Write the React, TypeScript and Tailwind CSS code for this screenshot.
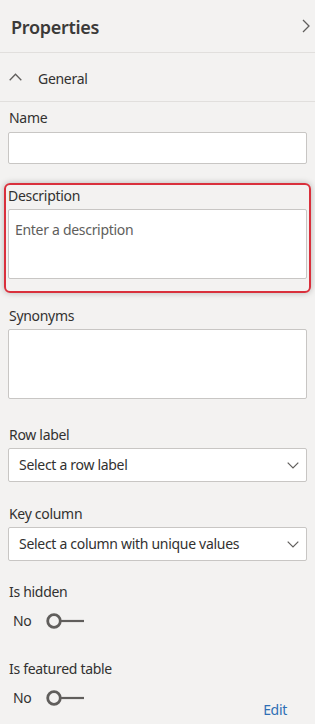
import React from "react";

const font = { fontFamily: '"Noto Sans", "Open Sans", sans-serif', letterSpacing: "-0.3px" };

function Toggle() {
  return (
    <div className="flex items-center h-5">
      <span className="text-[14px] leading-5 text-[#323130] w-[38px] pl-[5px]">No</span>
      <svg width="40" height="18" viewBox="0 0 40 18" className="block">
        <circle cx="8" cy="9" r="6.3" fill="none" stroke="#605e5c" strokeWidth="2.8" />
        <line x1="14.3" y1="9" x2="38" y2="9" stroke="#605e5c" strokeWidth="2.2" />
      </svg>
    </div>
  );
}

function Chevron() {
  return (
    <svg width="12" height="7" viewBox="0 0 12 7" className="block">
      <path d="M0.7 0.7 L6 6 L11.3 0.7" fill="none" stroke="#605e5c" strokeWidth="1.2" />
    </svg>
  );
}

export default function App() {
  return (
    <div className="w-[315px] h-[724px] bg-[#f3f2f1] text-[#323130] overflow-hidden" style={font}>
      <div className="h-[53px] flex items-center justify-between pl-[11px] pr-[5px] border-b border-[#e1dfdd]">
        <span className="text-[18px] font-semibold text-[#3b3a39] leading-6 mt-[1px]">Properties</span>
        <svg width="8" height="14" viewBox="0 0 8 14" className="block">
          <path d="M1 1 L7 7 L1 13" fill="none" stroke="#605e5c" strokeWidth="1.3" />
        </svg>
      </div>
      <div className="h-[49px] flex items-center pl-[9px] border-b border-[#e1dfdd]">
        <svg width="13" height="8" viewBox="0 0 13 8" className="block">
          <path d="M0.7 7.2 L6.5 1.2 L12.3 7.2" fill="none" stroke="#605e5c" strokeWidth="1.3" />
        </svg>
        <span className="ml-[16px] mt-[4px] text-[14px] leading-5 text-[#323130]">General</span>
      </div>

      <div className="px-2">
        <div className="mt-[6px] text-[14px] leading-5 pl-px">Name</div>
        <div className="mt-[4px] h-[32px] bg-white border border-[#c8c6c4] rounded-[2px]" />

        <div className="relative mt-[22px]">
          <div className="absolute left-[-4px] right-[-4px] top-[-3px] bottom-[-14px] border-2 border-[#d9303c] rounded-[6px] shadow-[0_0_6px_rgba(0,0,0,0.25)] pointer-events-none" />
          <div className="text-[14px] leading-5">Description</div>
          <div className="mt-[3px] h-[70px] bg-white border border-[#c8c6c4] rounded-[2px] pl-[6px] pt-[7px]">
            <span className="text-[14px] leading-5 text-[#605e5c]">Enter a description</span>
          </div>
        </div>

        <div className="mt-[27px] text-[14px] leading-5 pl-px">Synonyms</div>
        <div className="mt-[3px] h-[70px] bg-white border border-[#c8c6c4] rounded-[2px]" />

        <div className="mt-[26px] text-[14px] leading-5 pl-px">Row label</div>
        <div className="mt-[3px] h-[34px] bg-white border border-[#c8c6c4] rounded-[2px] flex items-center justify-between pl-[10px] pr-[7px]">
          <span className="text-[14px] leading-5">Select a row label</span>
          <Chevron />
        </div>

        <div className="mt-[22px] text-[14px] leading-5 pl-px">Key column</div>
        <div className="mt-[3px] h-[34px] bg-white border border-[#c8c6c4] rounded-[2px] flex items-center justify-between pl-[10px] pr-[7px]">
          <span className="text-[14px] leading-5">Select a column with unique values</span>
          <Chevron />
        </div>

        <div className="mt-[21px] text-[14px] leading-5 pl-px">Is hidden</div>
        <div className="mt-[9px]">
          <Toggle />
        </div>

        <div className="mt-[28px] text-[14px] leading-5 pl-px">Is featured table</div>
        <div className="mt-[9px] flex items-start justify-between">
          <Toggle />
          <span className="mt-[12px] mr-[20px] text-[14px] leading-5 text-[#2f6fb5]">Edit</span>
        </div>
      </div>
    </div>
  );
}
